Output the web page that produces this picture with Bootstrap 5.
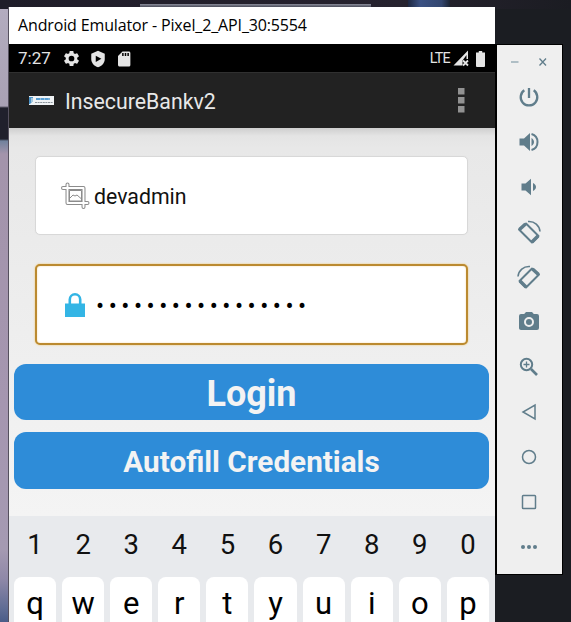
<!DOCTYPE html>
<html lang="en">
<head>
<meta charset="utf-8">
<meta name="viewport" content="width=device-width, initial-scale=1">
<title>Android Emulator</title>
<link href="https://cdn.jsdelivr.net/npm/bootstrap@5.3.0/dist/css/bootstrap.min.css" rel="stylesheet">
<style>
html,body{height:622px;overflow:hidden}
body{font-family:Roboto,sans-serif;color:#111;
 background:
 linear-gradient(#8b8d9b,#4a4c5a) 140px 4px/231px 3px no-repeat,
 linear-gradient(90deg,#1d2740,#3b5183 30%,#33466f 80%,#1c2434) 408px 0/42px 7px no-repeat,
 linear-gradient(90deg,#1f1d29,#26222e 70%,#1b1c22) 0 0/571px 9px no-repeat,
 linear-gradient(#b3acbf 0,#a9a1b4 97px,#20202c 99px,#20202c 130px,#71829d 132px,#a394ab 145px,#a596b0 400px,#a59ab2 540px,#8f88a8 570px,#5f6c94 600px,#4a5c88 613px) 0 9px/9px 613px no-repeat,
 #1b1d22;}
svg{display:block;flex:none}
.emu{width:486px;height:615px;margin:7px 0 0 9px;box-shadow:-1px 0 #55505e;overflow:hidden}
.title-strip{height:37px;padding-left:9px;font:16px/36px "Open Sans",sans-serif;letter-spacing:-.14px;color:#000;white-space:nowrap}
.status{height:28px;padding:1px 10px 0 9px;color:#e4e4e4;font-size:17px}
.clock{margin-right:3px}
.lte{font-size:14.3px;letter-spacing:-.7px;margin-right:3px}
.batt{margin-left:7px}
.appbar{height:56px;background:#222;border-top:1px solid #303030;padding:0 28px 0 20px;color:#e8e8e8;font-size:21.3px;box-shadow:0 1px #777}
.app-name{margin-left:11px;padding-top:3px}
.pane{height:388px;background:linear-gradient(#cfcfcf 0,#e4e4e4 8px,#e8e8e8 20px,#f4f4f4 100%);padding:28px 6px 0 5px}
.field{height:79px;margin:0 21px;background:#fff;border:1px solid #d8d8d8;border-radius:5px;padding-left:25px;font-size:21.3px;box-shadow:0 0 1px #ddd}
.user{margin-left:4px;padding-top:2px}
.field.active{margin-top:29px;height:81px;border:2px solid #bb8a30;box-shadow:0 0 2px #f0c060,inset 0 0 2px #f5d9a8;padding-left:28px}
.dots{font-size:24px;letter-spacing:4.53px;line-height:30px;color:#000;margin-left:11px;padding-top:2px}
.acts{gap:12px;margin-top:18.500px}
.act{height:56.500px;background:#2e8cd8;border:0;border-radius:12px;color:#f3f3f3;font-weight:700;line-height:1}
#login{font-size:36px;padding:5px 0 0}
#autofill{font-size:29.7px;padding:3px 0 0}
.keys{height:106px;background:#e8eaed;padding:0 3px 0 2px}
.key{flex:1 1 0;text-align:center}
.num{font-size:27.5px;line-height:58px;height:61px}
.cap{margin:0 3px;height:60px;background:#fff;border-radius:8px 8px 0 0;font-size:31px;line-height:54px;color:#000}
.tools{width:68px;height:531px;margin-top:44px;background:#efefef;border:1px solid #000;border-width:1px 1px 1px 2px;color:#607d8b}
.winctl{height:29px;padding:5px 0 0 14px}
.tool{height:45px;padding-right:1px}
</style>
<script src="https://cdn.jsdelivr.net/npm/bootstrap@5.3.0/dist/js/bootstrap.bundle.min.js"></script>
</head>
<body>
<div class="d-flex align-items-start">
 <main class="emu flex-shrink-0 bg-white">
  <div class="title-strip">Android Emulator - Pixel_2_API_30:5554</div>
  <div class="status bg-black d-flex align-items-center">
   <span class="clock">7:27</span>
   <svg class="ms-2" width="19" height="19" viewBox="0 0 24 24" fill="#e4e4e4"><path d="M19.14 12.94c.04-.3.06-.61.06-.94 0-.32-.02-.64-.07-.94l2.03-1.58a.49.49 0 0 0 .12-.61l-1.92-3.32a.49.49 0 0 0-.59-.22l-2.39.96a7 7 0 0 0-1.62-.94l-.36-2.54a.48.48 0 0 0-.48-.41h-3.84a.48.48 0 0 0-.47.41l-.36 2.54c-.59.24-1.13.57-1.62.94l-2.39-.96a.48.48 0 0 0-.59.22L2.74 8.87a.48.48 0 0 0 .12.61l2.03 1.58a7 7 0 0 0 0 1.88l-2.03 1.58a.49.49 0 0 0-.12.61l1.92 3.32c.12.22.37.29.59.22l2.39-.96c.5.38 1.03.7 1.62.94l.36 2.54c.05.24.24.41.48.41h3.84c.24 0 .44-.17.47-.41l.36-2.54a7 7 0 0 0 1.62-.94l2.39.96c.22.08.47 0 .59-.22l1.92-3.32a.48.48 0 0 0-.12-.61zM12 15.6a3.6 3.6 0 1 1 0-7.2 3.6 3.6 0 0 1 0 7.2z"/></svg>
   <svg class="ms-2" width="18" height="18" viewBox="0 0 24 24"><path fill="#e4e4e4" d="M12 1 3 5v7c0 5.200 3.800 9.700 9 11 5.200-1.300 9-5.800 9-11V5z"/><path d="M9 7.500v8.500l7.500-4.300z"/></svg>
   <svg class="ms-2" width="18" height="18" viewBox="0 0 24 24"><path fill="#e4e4e4" d="M18.500 2H10L4 8v12c0 1.100.9 2 2 2h12.500a2 2 0 0 0 2-2V4c0-1.100-.9-2-2-2z"/><path d="M9.500 4h2v4h-2zm3.500 0h2v4h-2zm3.500 0h2v4h-2z"/></svg>
   <span class="ms-auto lte">LTE</span>
   <svg width="16" height="17" viewBox="0 0 16 17"><path fill="#e4e4e4" d="M.5 15.500 15 .5V9h-1.500V5l-4 5.500v5z"/><path stroke="#e4e4e4" stroke-width="1.800" d="m10 10.500 5 5m0-5-5 5"/></svg>
   <svg class="batt" width="9" height="16" viewBox="0 0 9 16"><path fill="#e4e4e4" d="M2.800 0h3.400v1.500H9V15a1 1 0 0 1-1 1H1a1 1 0 0 1-1-1V1.500h2.800z"/></svg>
  </div>
  <div class="appbar d-flex align-items-center">
   <svg width="25" height="9" viewBox="0 0 25 9"><path fill="#f0f3f5" d="M0 0h25v9H0z"/><path fill="#4b93c8" d="M0 1h4v4L1 8H0z"/><path fill="#a7c9df" d="M2 2h2v4H2z"/><path stroke="#5aa0d4" stroke-width="2" stroke-dasharray="4 .4" d="M7 3h14"/><path stroke="#8b949c" stroke-width="1" stroke-dasharray="2 .6" d="M6 6.500h18"/></svg>
   <span class="app-name">InsecureBankv2</span>
   <svg class="ms-auto" width="11" height="25" viewBox="0 0 11 25" fill="#929292"><path d="M2 0h6.500v6.500H2zm0 9h6.500v6.500H2zm0 9h6.500v6.500H2z"/></svg>
  </div>
  <section class="pane">
   <div class="field d-flex align-items-center">
    <svg width="29" height="28" viewBox="0 0 29 28" fill="none"><g stroke="#8c8c8c" stroke-width="4" stroke-linecap="round" stroke-linejoin="round"><path d="M2 6H22.500v19M6.500 2.500V21H26.500"/></g><g stroke="#fff" stroke-width="1.900" stroke-linecap="round" stroke-linejoin="round"><path d="M2 6H22.500v19M6.500 2.500V21H26.500"/></g><path stroke="#8c8c8c" d="M8.500 8.500h12V19h-12zM9 16l3-3 2 1 2-1 4 3.500"/></svg>
    <span class="user">devadmin</span>
   </div>
   <div class="field active d-flex align-items-center">
    <svg width="20" height="24" viewBox="0 0 20 24"><path fill="none" stroke="#33b5e5" stroke-width="2.600" d="M4.800 12V6.500a5.200 5.200 0 0 1 10.400 0V12"/><path fill="#33b5e5" d="M0 10.500h20V24H0z"/></svg>
    <span class="dots">•••••••••••••••••</span>
   </div>
   <div class="d-grid acts">
    <button class="btn act" id="login" type="button">Login</button>
    <button class="btn act" id="autofill" type="button">Autofill Credentials</button>
   </div>
  </section>
  <section class="keys">
   <div class="d-flex"><span class="key num">1</span><span class="key num">2</span><span class="key num">3</span><span class="key num">4</span><span class="key num">5</span><span class="key num">6</span><span class="key num">7</span><span class="key num">8</span><span class="key num">9</span><span class="key num">0</span></div>
   <div class="d-flex"><span class="key cap">q</span><span class="key cap">w</span><span class="key cap">e</span><span class="key cap">r</span><span class="key cap">t</span><span class="key cap">y</span><span class="key cap">u</span><span class="key cap">i</span><span class="key cap">o</span><span class="key cap">p</span></div>
  </section>
 </main>
 <aside class="tools flex-shrink-0">
  <div class="winctl d-flex align-items-center">
   <svg width="36" height="10" viewBox="0 0 36 10" fill="none" stroke="#607d8b" stroke-width="1.300"><path stroke="#9fb1ba" stroke-width="1.600" d="M0 5h7.500"/><path d="m28.500 1.500 6.500 7m0-7-6.500 7"/></svg>
  </div>
  <div class="tool d-flex align-items-center justify-content-center"><svg width="24" height="24" viewBox="0 0 24 24" fill="none" stroke="#607d8b" stroke-width="2.300"><path d="M12 3v10M7.300 5.300a8.300 8.300 0 1 0 9.400 0"/></svg></div>
  <div class="tool d-flex align-items-center justify-content-center"><svg width="24" height="24" viewBox="0 0 24 24" fill="#607d8b"><path d="M2.500 8.500v7H7l6 5.500V3L7 8.500zM14.500 8v8c1.500-.8 2.500-2.300 2.500-4s-1-3.200-2.500-4z"/><path fill="none" stroke="#607d8b" stroke-width="2" d="M14.500 4c3.500 1 6 4.200 6 8s-2.500 7-6 8"/></svg></div>
  <div class="tool d-flex align-items-center justify-content-center"><svg width="24" height="24" viewBox="0 0 24 24" fill="#607d8b"><path d="M4.500 8.500v7h4l5.500 4.700V3.800L8.500 8.500zM16 8v8c1.800-.8 3-2.300 3-4s-1.200-3.200-3-4z"/></svg></div>
  <div class="tool d-flex align-items-center justify-content-center"><svg width="26" height="26" viewBox="0 0 26 26" fill="none" stroke="#607d8b"><path stroke-width="2" stroke-linejoin="round" d="m10 4.500 12.500 12.500-6.500 6.500L3 10.500z"/><path stroke-width="3.500" d="m3.500 10.500 6-5.500M16 23l6-6"/><path stroke-width="1.600" d="M12 2.500c6.500-.5 11.500 4 12 10"/></svg></div>
  <div class="tool d-flex align-items-center justify-content-center"><svg width="26" height="26" viewBox="0 0 26 26" fill="none" stroke="#607d8b"><path stroke-width="2" stroke-linejoin="round" d="M16 4.500 3.500 17l6.500 6.500L23 10.500z"/><path stroke-width="3.500" d="m22.500 10.500-6-5.500M10 23l-6-6"/><path stroke-width="1.600" d="M14 2.500C7.500 2 2.500 6.500 2 12.500"/></svg></div>
  <div class="tool d-flex align-items-center justify-content-center"><svg width="24" height="24" viewBox="0 0 24 24" fill="#607d8b"><path d="M9 2 7.200 4H4a2 2 0 0 0-2 2v12c0 1.100.9 2 2 2h16a2 2 0 0 0 2-2V6a2 2 0 0 0-2-2h-3.200L15 2z"/><circle cx="12" cy="12" r="4" fill="none" stroke="#efefef" stroke-width="2"/></svg></div>
  <div class="tool d-flex align-items-center justify-content-center"><svg width="24" height="24" viewBox="0 0 24 24" fill="none" stroke="#607d8b" stroke-width="2"><circle cx="9.500" cy="9.500" r="5.700"/><path d="m14 14 6 6" stroke-width="2.600"/><path stroke-width="1.300" d="M9.500 6.500v6m-3-3h6"/></svg></div>
  <div class="tool d-flex align-items-center justify-content-center"><svg width="24" height="24" viewBox="0 0 24 24" fill="none" stroke="#607d8b" stroke-width="1.500"><path d="M18 5v14L6 12z"/></svg></div>
  <div class="tool d-flex align-items-center justify-content-center"><svg width="24" height="24" viewBox="0 0 24 24" fill="none" stroke="#607d8b" stroke-width="1.500"><circle cx="12" cy="12" r="6.500"/></svg></div>
  <div class="tool d-flex align-items-center justify-content-center"><svg width="24" height="24" viewBox="0 0 24 24" fill="none" stroke="#607d8b" stroke-width="1.500"><rect x="5.500" y="5.500" width="13" height="13" rx=".8"/></svg></div>
  <div class="tool d-flex align-items-center justify-content-center"><svg width="24" height="24" viewBox="0 0 24 24" fill="#607d8b"><circle cx="6" cy="12" r="2"/><circle cx="12" cy="12" r="2"/><circle cx="18" cy="12" r="2"/></svg></div>
 </aside>
</div>
</body>
</html>
